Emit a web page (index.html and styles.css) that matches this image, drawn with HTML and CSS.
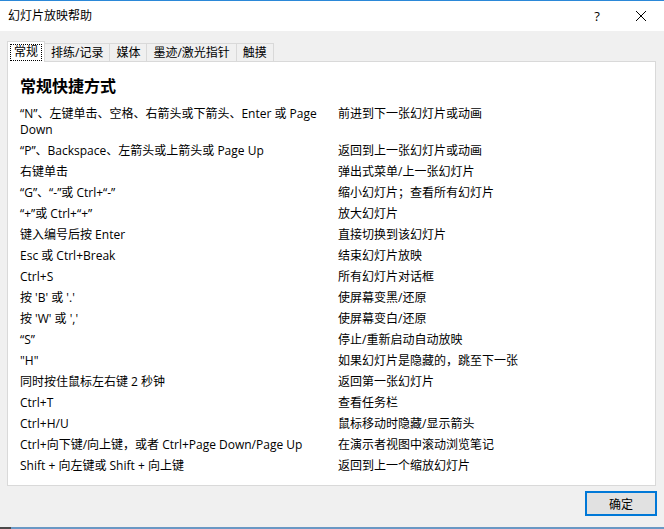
FILE: index.html
```html
<!DOCTYPE html>
<html lang="zh-CN">
<head>
<meta charset="utf-8">
<title>幻灯片放映帮助</title>
<link rel="stylesheet" href="styles.css">
</head>
<body>
<div class="dialog">
  <div class="titlebar">
    <span class="title">幻灯片放映帮助</span>
    <span class="help">?</span>
    <span class="close"><svg width="12" height="12" viewBox="0 0 12 12"><path d="M1 1 L11 11 M11 1 L1 11" stroke="#000" stroke-width="1" fill="none"/></svg></span>
  </div>
  <div class="body">
    <div class="tabs">
      <div class="tab active"><span class="focus">常规</span></div>
      <div class="tab">排练/记录</div>
      <div class="tab">媒体</div>
      <div class="tab">墨迹/激光指针</div>
      <div class="tab">触摸</div>
    </div>
    <div class="panel">
      <h1 class="heading">常规快捷方式</h1>
      <div class="grid">
        <div class="key">“N”、左键单击、空格、右箭头或下箭头、Enter 或 Page<br>Down</div><div class="act">前进到下一张幻灯片或动画</div>
        <div class="key">“P”、Backspace、左箭头或上箭头或 Page Up</div><div class="act">返回到上一张幻灯片或动画</div>
        <div class="key">右键单击</div><div class="act">弹出式菜单/上一张幻灯片</div>
        <div class="key">“G”、“-”或 Ctrl+“-”</div><div class="act">缩小幻灯片；查看所有幻灯片</div>
        <div class="key">“+”或 Ctrl+“+”</div><div class="act">放大幻灯片</div>
        <div class="key">键入编号后按 Enter</div><div class="act">直接切换到该幻灯片</div>
        <div class="key">Esc 或 Ctrl+Break</div><div class="act">结束幻灯片放映</div>
        <div class="key">Ctrl+S</div><div class="act">所有幻灯片对话框</div>
        <div class="key">按 'B' 或 '.'</div><div class="act">使屏幕变黑/还原</div>
        <div class="key">按 'W' 或 ','</div><div class="act">使屏幕变白/还原</div>
        <div class="key">“S”</div><div class="act">停止/重新启动自动放映</div>
        <div class="key">"H"</div><div class="act">如果幻灯片是隐藏的，跳至下一张</div>
        <div class="key">同时按住鼠标左右键 2 秒钟</div><div class="act">返回第一张幻灯片</div>
        <div class="key">Ctrl+T</div><div class="act">查看任务栏</div>
        <div class="key">Ctrl+H/U</div><div class="act">鼠标移动时隐藏/显示箭头</div>
        <div class="key">Ctrl+向下键/向上键，或者 Ctrl+Page Down/Page Up</div><div class="act">在演示者视图中滚动浏览笔记</div>
        <div class="key">Shift + 向左键或 Shift + 向上键</div><div class="act">返回到上一个缩放幻灯片</div>
      </div>
    </div>
    <div class="buttons">
      <button class="ok">确定</button>
    </div>
  </div>
  <div class="taskedge"><span class="dark"></span><span class="blue"></span></div>
</div>
</body>
</html>
```
FILE: styles.css
```css
* { box-sizing: border-box; }
html, body { margin: 0; padding: 0; }
body {
  width: 664px;
  height: 529px;
  overflow: hidden;
  background: #f0f0f0;
  font-family: "Open Sans", "Noto Sans CJK SC", sans-serif;
  font-size: 12px;
  color: #000;
}
.dialog {
  width: 664px;
  height: 529px;
  display: flex;
  flex-direction: column;
}
.titlebar {
  height: 31px;
  border-top: 1px solid #2b88d8;
  background: #fff;
  display: flex;
  align-items: center;
  padding-left: 8px;
}
.title { flex: 1; line-height: 16px; }
.help {
  width: 16px;
  text-align: center;
  margin-right: 30px;
  font-size: 13px;
  line-height: 16px;
}
.close {
  width: 12px;
  height: 12px;
  margin-right: 17px;
  display: flex;
}
.body {
  padding: 10px 8px 0 7px;
  display: flex;
  flex-direction: column;
}
.tabs {
  display: flex;
  align-items: flex-end;
  height: 20px;
  position: relative;
  z-index: 1;
}
.tab {
  height: 18px;
  padding: 0 6px;
  border: 1px solid #d9d9d9;
  border-bottom: none;
  margin-left: -1px;
  background: #f0f0f0;
  line-height: 16px;
  display: flex;
  align-items: center;
}
.tab.active {
  height: 21px;
  margin-left: 0;
  margin-bottom: -1px;
  background: #fff;
  padding: 0 2px;
  border-color: #d9d9d9;
}
.focus {
  border: 1px dotted #000;
  padding: 0 3px;
  line-height: 14px;
  height: 17px;
  display: flex;
  align-items: center;
}
.panel {
  height: 425px;
  background: #fff;
  border: 1px solid #d9d9d9;
  padding: 13px 12px 0 12px;
}
.heading {
  margin: 0 0 9px 0;
  font-size: 16px;
  font-weight: bold;
  line-height: 22px;
}
.grid {
  display: grid;
  grid-template-columns: 318px 1fr;
  row-gap: 5px;
  line-height: 16px;
}
.key { white-space: nowrap; }
.buttons {
  display: flex;
  justify-content: flex-end;
  padding-top: 5px;
}
.ok {
  width: 72px;
  height: 25px;
  border: 2px solid #0078d7;
  background: #e1e1e1;
  font-family: inherit;
  font-size: 12px;
  color: #000;
  padding: 0;
  margin-right: -1px;
}
.taskedge {
  margin-top: auto;
  height: 2px;
  display: flex;
}
.dark { width: 11px; background: #4a4a4a; }
.blue { flex: 1; background: #6a98c4; }
```
